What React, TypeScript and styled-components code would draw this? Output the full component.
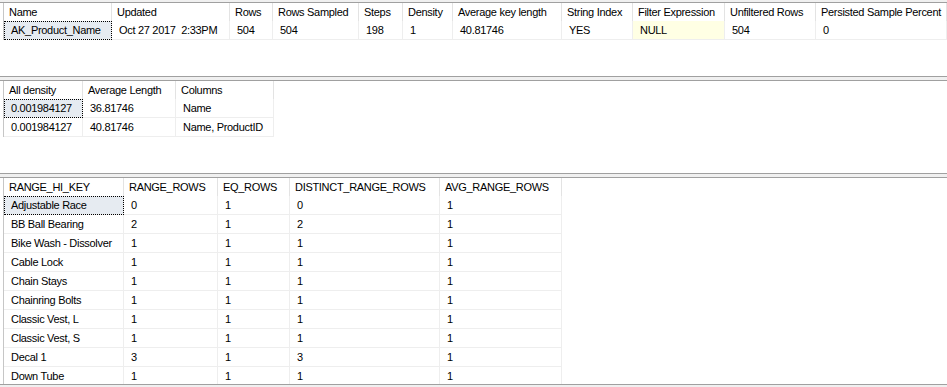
import React from 'react'
import styled, { createGlobalStyle, css } from 'styled-components'

type Column = {
  title: string
  width: number
}

type ResultSet = {
  columns: Column[]
  rows: string[][]
}

const GlobalStyle = createGlobalStyle`
  html, body {
    margin: 0;
    padding: 0;
    background: #ffffff;
  }

  body {
    font-family: 'Liberation Sans', Arial, sans-serif;
  }
`

const header: ResultSet = {
  columns: [
    { title: 'Name', width: 108 },
    { title: 'Updated', width: 118 },
    { title: 'Rows', width: 43 },
    { title: 'Rows Sampled', width: 86 },
    { title: 'Steps', width: 44 },
    { title: 'Density', width: 50 },
    { title: 'Average key length', width: 109 },
    { title: 'String Index', width: 71 },
    { title: 'Filter Expression', width: 92 },
    { title: 'Unfiltered Rows', width: 91 },
    { title: 'Persisted Sample Percent', width: 131 }
  ],
  rows: [
    ['AK_Product_Name', 'Oct 27 2017  2:33PM', '504', '504', '198', '1', '40.81746', 'YES', 'NULL', '504', '0']
  ]
}

const densityVector: ResultSet = {
  columns: [
    { title: 'All density', width: 79 },
    { title: 'Average Length', width: 93 },
    { title: 'Columns', width: 98 }
  ],
  rows: [
    ['0.001984127', '36.81746', 'Name'],
    ['0.001984127', '40.81746', 'Name, ProductID']
  ]
}

const histogram: ResultSet = {
  columns: [
    { title: 'RANGE_HI_KEY', width: 120 },
    { title: 'RANGE_ROWS', width: 94 },
    { title: 'EQ_ROWS', width: 72 },
    { title: 'DISTINCT_RANGE_ROWS', width: 150 },
    { title: 'AVG_RANGE_ROWS', width: 122 }
  ],
  rows: [
    ['Adjustable Race', '0', '1', '0', '1'],
    ['BB Ball Bearing', '2', '1', '2', '1'],
    ['Bike Wash - Dissolver', '1', '1', '1', '1'],
    ['Cable Lock', '1', '1', '1', '1'],
    ['Chain Stays', '1', '1', '1', '1'],
    ['Chainring Bolts', '1', '1', '1', '1'],
    ['Classic Vest, L', '1', '1', '1', '1'],
    ['Classic Vest, S', '1', '1', '1', '1'],
    ['Decal 1', '3', '1', '3', '1'],
    ['Down Tube', '1', '1', '1', '1']
  ]
}

const ResultGrid = ({ data }: { data: ResultSet }) => (
  <Grid $template={['4px', ...data.columns.map(c => `${c.width}px`)].join(' ')}>
    <RowHeader $head />
    {data.columns.map(col => (
      <HeaderCell key={col.title}>{col.title}</HeaderCell>
    ))}
    {data.rows.map((row, r) => (
      <React.Fragment key={r}>
        <RowHeader />
        {row.map((value, c) => (
          <DataCell key={c} $focused={r === 0 && c === 0} $null={value === 'NULL'}>
            {value}
          </DataCell>
        ))}
      </React.Fragment>
    ))}
  </Grid>
)

const App = () => (
  <>
    <GlobalStyle />
    <Window>
      <TopEdge />
      <Pane $height={73}>
        <ResultGrid data={header} />
      </Pane>
      <Splitter />
      <Pane $height={92}>
        <ResultGrid data={densityVector} />
      </Pane>
      <Splitter />
      <Pane $height={206}>
        <ResultGrid data={histogram} />
      </Pane>
      <BottomEdge />
    </Window>
  </>
)

const Window = styled.div`
  width: 947px;
  height: 387px;
  display: flex;
  flex-direction: column;
  overflow: hidden;
  background: #ffffff;
`

const TopEdge = styled.div`
  flex: none;
  height: 2px;
  background: #f0f0f0;
  border-bottom: 1px solid #a0a0a0;
`

const BottomEdge = styled.div`
  flex: none;
  height: 2px;
  background: #f0f0f0;
  border-top: 1px solid #a0a0a0;
`

const Splitter = styled.div`
  flex: none;
  height: 3px;
  background: #f0f0f0;
  border-top: 1px solid #a0a0a0;
  border-bottom: 1px solid #a0a0a0;
`

const Pane = styled.div<{ $height: number }>`
  flex: none;
  height: ${p => p.$height}px;
  overflow: hidden;
  background: #ffffff;
`

const Grid = styled.div<{ $template: string }>`
  display: inline-grid;
  grid-template-columns: ${p => p.$template};
  grid-auto-rows: auto;
  font-size: 11px;
  letter-spacing: -0.3px;
  color: #000000;
`

const RowHeader = styled.div<{ $head?: boolean }>`
  box-sizing: border-box;
  height: ${p => (p.$head ? 18 : 19)}px;
  border-right: 1px solid #c6c6c6;
  background: #ffffff;
`

const HeaderCell = styled.div`
  box-sizing: border-box;
  height: 18px;
  line-height: 18px;
  padding-left: 5px;
  border-right: 1px solid #e3e3e3;
  white-space: nowrap;
  overflow: hidden;
`

const DataCell = styled.div<{ $focused?: boolean; $null?: boolean }>`
  box-sizing: border-box;
  height: 19px;
  line-height: 18px;
  padding-left: 7px;
  border-right: 1px solid #eeeeee;
  border-bottom: 1px solid #eeeeee;
  white-space: pre;
  overflow: hidden;
  background: ${p => (p.$null ? '#ffffe4' : '#ffffff')};

  ${p => p.$focused && css`
    background: #e6ebf1;
    outline: 1px dotted #000000;
    outline-offset: -1px;
  `}
`

export default App
